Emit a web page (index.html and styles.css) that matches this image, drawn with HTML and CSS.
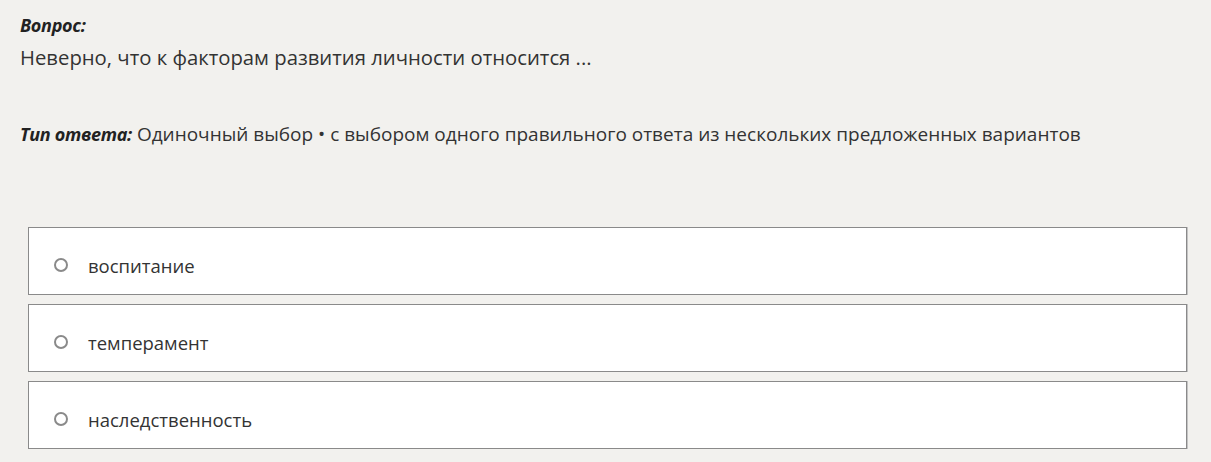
FILE: index.html
```html
<!DOCTYPE html>
<html lang="ru">
<head>
    <meta charset="UTF-8">
    <title>Вопрос</title>
    <link rel="stylesheet" href="styles.css">
</head>
<body>
    <div class="question">
        <div class="label">Вопрос:</div>
        <div class="question-text">Неверно, что к факторам развития личности относится ...</div>

        <div class="answer-type"><span class="label">Тип ответа:</span> Одиночный выбор • с выбором одного правильного ответа из нескольких предложенных вариантов</div>
    </div>

    <div class="options">
        <label class="option"><span class="radio"></span>воспитание</label>
        <label class="option"><span class="radio"></span>темперамент</label>
        <label class="option"><span class="radio"></span>наследственность</label>
    </div>
</body>
</html>
```

FILE: styles.css
```css
body {
    margin: 0;
    background: #f2f1ee;
    color: #333;
    font-family: "Open Sans", "Noto Sans", sans-serif;
}

.question {
    padding: 13px 20px 0 20px;
}

.label {
    font-style: italic;
    font-weight: 700;
    font-size: 18px;
    line-height: 24px;
    color: #222;
    letter-spacing: -0.3px;
}

.question-text {
    font-size: 20.3px;
    line-height: 28px;
    margin-top: 6px;
}

.answer-type {
    font-size: 19px;
    line-height: 26px;
    margin-top: 50px;
}

.options {
    display: flex;
    flex-direction: column;
    gap: 9px;
    margin: 80px 24px 0 28px;
}

.option {
    display: flex;
    align-items: center;
    box-sizing: border-box;
    height: 68px;
    padding: 8px 0 0 25px;
    background: #fff;
    border: 1px solid #8a8a8a;
    box-shadow: 1px 0 0 #c4c4c4;
    font-size: 18.5px;
    color: #333;
}

.radio {
    flex: none;
    width: 10px;
    height: 10px;
    border: 2px solid #8a8a8a;
    border-radius: 50%;
    margin-right: 20px;
}
```
